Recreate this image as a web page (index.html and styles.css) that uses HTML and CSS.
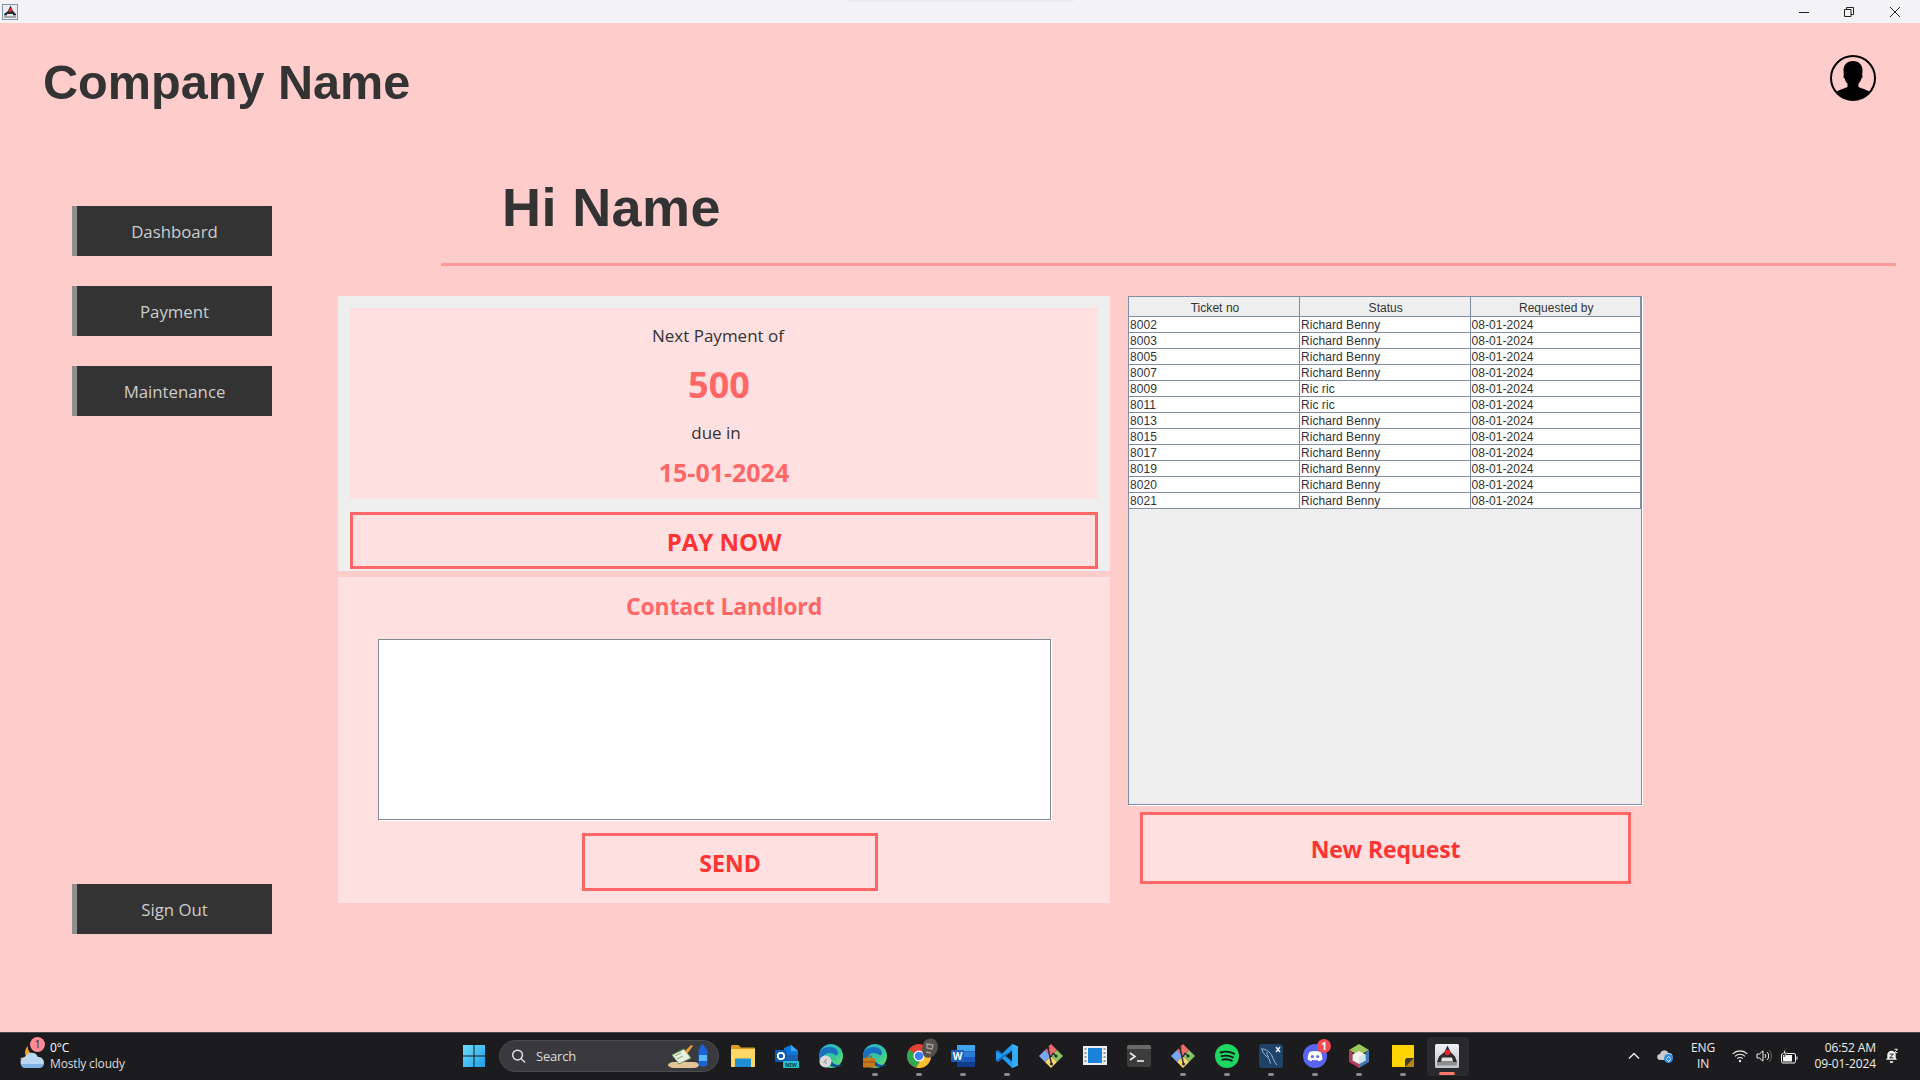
FILE: index.html
```html
<!DOCTYPE html>
<html lang="en">
<head>
<meta charset="utf-8">
<title>Company Name</title>
<link rel="stylesheet" href="styles.css">
</head>
<body>
<div class="window">
  <div class="titlebar">
    <svg class="app-icon" viewBox="0 0 16 16"><rect x=".5" y=".5" width="15" height="15" fill="#e9edf2" stroke="#7f93ad"/><path d="M8.500 1.500 6 7 2 10v3h12v-3l-3-3z" fill="#2c2c30"/><path d="M2 11h12v3H2z" fill="#a5a5a5"/><path d="M5 10h6v2H5z" fill="#e8e8e8"/><circle cx="8.500" cy="6" r="1.900" fill="#f0202a"/></svg>
    <div class="win-controls">
      <svg class="win-btn" viewBox="0 0 10 10"><path d="M0 5.500h10" stroke="#222" fill="none"/></svg>
      <svg class="win-btn" viewBox="0 0 10 10"><path d="M.5 2.500h6.500v7H.5zM2.500 2.500V.5h7v7H7" stroke="#222" fill="none"/></svg>
      <svg class="win-btn" viewBox="0 0 10 10"><path d="M0 0l10 10M10 0 0 10" stroke="#222" fill="none"/></svg>
    </div>
    <span class="snap-hint"></span>
  </div>

  <main class="main">
    <header class="header">
      <h1 class="brand">Company Name</h1>
      <svg class="avatar" viewBox="0 0 46 46"><defs><clipPath id="avc"><circle cx="23" cy="23" r="22"/></clipPath></defs><circle cx="23" cy="23" r="22" fill="none" stroke="#000" stroke-width="2"/><g clip-path="url(#avc)"><path d="M23 6c6 0 9.500 4 9.500 9 0 2-.1 3.500-.4 5 .8.500.6 2.500-.6 3.200-.6 2.800-1.800 4.300-3 5.300v3.500c3 1.500 7.500 2.500 11 4.500L46 46H0l6.500-9.500c3.500-2 8-3 11-4.500v-3.500c-1.200-1-2.400-2.500-3-5.300-1.200-.7-1.400-2.700-.6-3.200-.3-1.500-.4-3-.4-5 0-5 3.500-9 9.500-9z" fill="#000"/></g></svg>
    </header>

    <div class="body">
      <nav class="sidebar">
        <button class="nav-btn">Dashboard</button>
        <button class="nav-btn">Payment</button>
        <button class="nav-btn">Maintenance</button>
        <button class="nav-btn nav-signout">Sign Out</button>
      </nav>

      <div class="content">
        <h2 class="greeting">Hi Name</h2>
        <div class="columns">
          <div class="left-col">
            <section class="pay-card">
              <div class="pay-info">
                <p class="pay-label pay-next">Next Payment of</p>
                <p class="pay-amount">500</p>
                <p class="pay-label pay-due">due in</p>
                <p class="pay-date">15-01-2024</p>
              </div>
              <button class="action-btn pay-btn">PAY NOW</button>
            </section>
            <section class="contact-card">
              <h3 class="contact-title">Contact Landlord</h3>
              <div class="message-box"></div>
              <button class="action-btn send-btn">SEND</button>
            </section>
          </div>

          <div class="right-col">
            <div class="table-wrap">
              <table class="tickets">
                <thead><tr><th>Ticket no</th><th>Status</th><th>Requested by</th></tr></thead>
                <tbody>
                  <tr><td>8002</td><td>Richard Benny</td><td>08-01-2024</td></tr>
                  <tr><td>8003</td><td>Richard Benny</td><td>08-01-2024</td></tr>
                  <tr><td>8005</td><td>Richard Benny</td><td>08-01-2024</td></tr>
                  <tr><td>8007</td><td>Richard Benny</td><td>08-01-2024</td></tr>
                  <tr><td>8009</td><td>Ric ric</td><td>08-01-2024</td></tr>
                  <tr><td>8011</td><td>Ric ric</td><td>08-01-2024</td></tr>
                  <tr><td>8013</td><td>Richard Benny</td><td>08-01-2024</td></tr>
                  <tr><td>8015</td><td>Richard Benny</td><td>08-01-2024</td></tr>
                  <tr><td>8017</td><td>Richard Benny</td><td>08-01-2024</td></tr>
                  <tr><td>8019</td><td>Richard Benny</td><td>08-01-2024</td></tr>
                  <tr><td>8020</td><td>Richard Benny</td><td>08-01-2024</td></tr>
                  <tr><td>8021</td><td>Richard Benny</td><td>08-01-2024</td></tr>
                </tbody>
              </table>
            </div>
            <button class="action-btn request-btn">New Request</button>
          </div>
        </div>
      </div>
    </div>
  </main>

  <footer class="taskbar">
    <div class="weather">
      <div class="weather-icon">
        <svg viewBox="0 0 26 26" width="26" height="26"><path d="M9 3a8 8 0 0 0-2 10 8 8 0 0 1-6 2c2 3 6 4 9 3l6-6C12 11 8 8 9 3z" fill="#f2a32c"/><path d="M7 25a5.500 5.500 0 0 1-1-10.900A7 7 0 0 1 19 14a5.500 5.500 0 0 1 1 11z" fill="#b9d6f2"/><path d="M7 25a5.500 5.500 0 0 1-5-4h23a5.500 5.500 0 0 1-5 4z" fill="#7fb0e6"/></svg>
        <span class="weather-badge">1</span>
      </div>
      <div class="weather-text"><span class="weather-temp">0°C</span><span class="weather-desc">Mostly cloudy</span></div>
    </div>

    <div class="task-center">
      <div class="tb-item"><svg class="tb-svg start" viewBox="0 0 24 24"><defs><linearGradient id="wg" x1="0" y1="0" x2="1" y2="1"><stop offset="0" stop-color="#6fdcfb"/><stop offset="1" stop-color="#1c9fe8"/></linearGradient></defs><path d="M1 1h10.500v10.500H1zM12.500 1H23v10.500H12.500zM1 12.500h10.500V23H1zM12.500 12.500H23V23H12.500z" fill="url(#wg)"/></svg></div>

      <div class="search">
        <svg class="search-icon" viewBox="0 0 16 16"><circle cx="7" cy="7" r="5.200" fill="none" stroke="#e6e6e6" stroke-width="1.500"/><path d="M10.800 10.800 15 15" stroke="#e6e6e6" stroke-width="1.500" fill="none"/></svg>
        <span class="search-text">Search</span>
        <svg class="search-art" viewBox="0 0 42 24"><path d="M0 21c0-1.500 3-3 6-3h20c3 0 5 1.500 5 3s-2 3-5 3H6c-3 0-6-1.500-6-3z" fill="#e3c598"/><path d="M4 11l12-6 7 9-12 6z" fill="#e9efe2" stroke="#66945c"/><path d="M7 12l6-3M9 15l6-3" stroke="#86a880" fill="none"/><path d="M17 7l6-6 2 1-6 8z" fill="#e79b3c"/><path d="M32 4c0-2 1-3 2.500-4C36 1 37 2 37 4c2 1 2.500 2.500 2.500 4v12c0 2-2 2.500-4.500 2.500S30.500 22 30.500 20V8c0-2 .5-3 1.500-4z" fill="#1c63d8"/><path d="M31 11h8v6h-8z" fill="#5ab8ff"/></svg>
      </div>

      <div class="tb-apps">
        <div class="tb-item"><svg class="tb-svg" viewBox="0 0 24 24"><path d="M0 2.500C0 1.500.7 1 1.500 1h6l2.500 2.500h13c.6 0 1 .4 1 1V8H0z" fill="#d99a1e"/><path d="M0 5h24v17c0 .6-.4 1-1 1H1c-.6 0-1-.4-1-1z" fill="#ffd766"/><path d="M5 14.500h14c.6 0 1 .4 1 1V23H4v-7.500c0-.6.4-1 1-1z" fill="#1f8fd4"/></svg></div>
        <div class="tb-item"><svg class="tb-svg" viewBox="0 0 24 24"><path d="M9 4l7-3 7 6v11H9z" fill="#0f78d4"/><path d="M16 1l7 6h-7z" fill="#35a8f0"/><path d="M9 11h14v8H9z" fill="#1a5fb0"/><rect x="0" y="6" width="12" height="12" rx="1" fill="#0a5cb8"/><circle cx="6" cy="12" r="3.200" fill="none" stroke="#fff" stroke-width="1.800"/><rect x="8" y="17" width="16" height="7" rx="1" fill="#27c2c4"/><text x="16" y="22.800" class="svg-new">NEW</text></svg></div>
        <div class="tb-item"><svg class="tb-svg" viewBox="0 0 24 24"><defs><linearGradient id="eg" x1="0" y1="0" x2="1" y2="1"><stop offset="0" stop-color="#2aa9e0"/><stop offset=".6" stop-color="#36c89a"/><stop offset="1" stop-color="#7be264"/></linearGradient></defs><circle cx="12" cy="12" r="12" fill="url(#eg)"/><path d="M0 12C0 6 5 3 11 3c5 0 8 3 8 6 0 2-2 3-3 2-3-3-11-3-13 4 0 3 2 7 6 8C4 22 0 18 0 12z" fill="#1a6fc0"/><path d="M7 16c0 4 5 7 10 7 3 0 5-1 7-3-4 2-9 1-11-2z" fill="#0d4f9c"/><circle cx="6.500" cy="17.500" r="6" fill="#d9d9d9"/><path d="M4.500 19l3-4M8 19h-2" stroke="#888" fill="none"/></svg></div>
        <div class="tb-item run"><svg class="tb-svg" viewBox="0 0 24 24"><circle cx="12" cy="12" r="12" fill="url(#eg)"/><path d="M0 12C0 6 5 3 11 3c5 0 8 3 8 6 0 2-2 3-3 2-3-3-11-3-13 4 0 3 2 7 6 8C4 22 0 18 0 12z" fill="#1a6fc0"/><path d="M7 16c0 4 5 7 10 7 3 0 5-1 7-3-4 2-9 1-11-2z" fill="#0d4f9c"/><rect x="0" y="14" width="12" height="9.500" rx="1" fill="#c9791d"/><path d="M4 14v-2h4v2M0 18h12" stroke="#8a4f10" fill="none"/></svg></div>
        <div class="tb-item run chrome"><svg class="tb-svg" viewBox="0 0 24 24"><circle cx="12" cy="12" r="12" fill="#e34133"/><path d="M24 12A12 12 0 0 1 9 23.600L16 12z" fill="#fbc02d"/><path d="M0 12A12 12 0 0 0 9 23.600L13 17 5 7.500 2 6a12 12 0 0 0-2 6z" fill="#2da94f"/><circle cx="12" cy="12" r="5.500" fill="#fff"/><circle cx="12" cy="12" r="4.300" fill="#3f82ee"/></svg><svg class="chrome-over" viewBox="0 0 17 21"><path d="M3 4c2-4 9-5 12-1 3 4 2 9 0 12-2 4-8 6-11 4S0 9 3 4z" fill="#55514c"/><path d="M6 6l6 1-1 4-5-1zM5 14l5 1" stroke="#a8a39b" stroke-width="1.300" fill="none"/></svg></div>
        <div class="tb-item run"><svg class="tb-svg" viewBox="0 0 24 24"><path d="M6 1h17c.6 0 1 .4 1 1v5.500H6z" fill="#41a5ee"/><path d="M6 7.500h18V13H6z" fill="#2b7cd3"/><path d="M6 13h18v5.500H6z" fill="#185abd"/><path d="M6 18.500h18V22c0 .6-.4 1-1 1H6z" fill="#103f91"/><rect y="6" width="13" height="12" rx="1" fill="#1e5fbe"/><text x="6.500" y="15.500" class="svg-w">W</text></svg></div>
        <div class="tb-item run"><svg class="tb-svg" viewBox="0 0 24 24"><path d="M17.200 0 7.300 9.600 3 6.300 1 7.300v9.400l2 1 4.300-3.300 9.900 9.600 5.800-2.400V2.400zM17.200 6.500v11L10.500 12z" fill="#1f9cf0"/><path d="M17.200 0l5.800 2.400v19.200L17.200 24z" fill="#33adf5"/><path d="M17.200 6.500 7.300 14.400 3 17.700l-2-1 6.300-4.700zM1 7.300l2-1 4.300 3.300 2.200 2.400" fill="#0a6cbd"/></svg></div>
        <div class="tb-item"><svg class="tb-svg" viewBox="0 0 24 24"><path d="M12 12 6 6 0 12l6 6z" fill="#7aa7f5"/><path d="M12 12 18 6l6 6-6 6z" fill="#86c663"/><path d="M12 12 6 18l6 6 6-6z" fill="#f5d76e"/><path d="M12 12 6 6l6-6 6 6z" fill="#ec6a6a"/><path d="M9 4l3.500 16M14 9l-2 4M14 9l3 3" stroke="#2a2a2a" stroke-width="1.400" fill="none"/><circle cx="9" cy="4" r="1.500" fill="#2a2a2a"/><circle cx="12.500" cy="20" r="1.500" fill="#2a2a2a"/><circle cx="17" cy="12" r="1.500" fill="#2a2a2a"/></svg></div>
        <div class="tb-item"><svg class="tb-svg" viewBox="0 0 24 24"><rect y="2" width="24" height="19" fill="#eceff1"/><rect x="5" y="4" width="14" height="15" fill="#1a82d8"/><path d="M1.500 4h2v2h-2zM1.500 8h2v2h-2zM1.500 12h2v2h-2zM1.500 16h2v2h-2zM20.500 4h2v2h-2zM20.500 8h2v2h-2zM20.500 12h2v2h-2zM20.500 16h2v2h-2z" fill="#8e9aa2"/></svg></div>
        <div class="tb-item"><svg class="tb-svg" viewBox="0 0 24 24"><rect y="1" width="24" height="22" rx="2" fill="#3c3c3c"/><path d="M0 3c0-1 1-2 2-2h20c1 0 2 1 2 2v2H0z" fill="#6a6a6a"/><path d="M3 9l5 3.500L3 16" stroke="#f0f0f0" stroke-width="1.600" fill="none"/><path d="M10 17h7" stroke="#f0f0f0" stroke-width="1.600"/></svg></div>
        <div class="tb-item run"><svg class="tb-svg" viewBox="0 0 24 24"><path d="M12 12 6 6 0 12l6 6z" fill="#7aa7f5"/><path d="M12 12 18 6l6 6-6 6z" fill="#86c663"/><path d="M12 12 6 18l6 6 6-6z" fill="#f5d76e"/><path d="M12 12 6 6l6-6 6 6z" fill="#ec6a6a"/><path d="M9 4l3.500 16M14 9l-2 4M14 9l3 3" stroke="#2a2a2a" stroke-width="1.400" fill="none"/><circle cx="9" cy="4" r="1.500" fill="#2a2a2a"/><circle cx="12.500" cy="20" r="1.500" fill="#2a2a2a"/><circle cx="17" cy="12" r="1.500" fill="#2a2a2a"/></svg></div>
        <div class="tb-item run"><svg class="tb-svg" viewBox="0 0 24 24"><circle cx="12" cy="12" r="12" fill="#1ed760"/><path d="M5.500 8.500c4.500-1.300 9.500-1 13.500 1.200M6.500 12.200c3.800-1 8-.7 11.300 1.200M7.500 15.700c3-.8 6.500-.5 9.200 1" stroke="#13161a" stroke-width="1.900" stroke-linecap="round" fill="none"/></svg></div>
        <div class="tb-item run"><svg class="tb-svg" viewBox="0 0 24 24"><rect width="24" height="24" rx="3" fill="#1d4468"/><path d="M2 5c5-.5 9 3 11 7 1.500 3 2 6 5 9M3 5.500c1 4 4 7 7 9l1.500 5M8 8c-.5 2 .5 4 2 5" stroke="#a9c4d8" stroke-width=".9" fill="none"/><path d="M17 3l4 5M21 3l-4 5" stroke="#dfe9f0" stroke-width="1.600" fill="none"/></svg></div>
        <div class="tb-item run"><svg class="tb-svg" viewBox="0 0 24 24"><circle cx="12" cy="12" r="12" fill="#5865f2"/><path d="M6.500 8c3.400-1.400 7.600-1.400 11 0 1.500 2.500 2 5 1.800 7.500-1.300 1-2.500 1.500-3.800 1.800l-.9-1.300c-1.700.4-3.500.4-5.200 0l-.9 1.300c-1.300-.3-2.500-.8-3.800-1.800C4.500 13 5 10.500 6.500 8z" fill="#fff"/><circle cx="9.300" cy="12.500" r="1.500" fill="#5865f2"/><circle cx="14.700" cy="12.500" r="1.500" fill="#5865f2"/></svg><span class="tb-badge">1</span></div>
        <div class="tb-item run"><svg class="tb-svg" viewBox="0 0 24 24"><path d="M12 0 22 6 12 11.500 2 6z" fill="#9fc45b"/><path d="M2 6v12l10 6V20L5.500 16V8.500z" fill="#b83b5e"/><path d="M22 6v12l-10 6V20l6.500-4V8.500z" fill="#3f78b5"/><path d="M12 7l6.500 3.500v6L12 20l-6.500-3.500v-6z" fill="#f2f4ee"/><path d="M12 12.500l6.500-2v6L12 20z" fill="#cfe2ee"/></svg></div>
        <div class="tb-item run"><svg class="tb-svg" viewBox="0 0 24 24"><path d="M1 1h22v13l-9 9H1z" fill="#ffd400"/><path d="M14 23v-7c0-1 1-2 2-2h7v1l-8 8z" fill="#3a3a32"/><path d="M14 23l9-9v8c0 .6-.4 1-1 1z" fill="#b8860b"/></svg></div>
        <div class="tb-item active"><svg class="tb-svg" viewBox="0 0 24 24"><defs><linearGradient id="jg" x1="0" y1="0" x2="0" y2="1"><stop offset="0" stop-color="#eef2f6"/><stop offset="1" stop-color="#bfc4c9"/></linearGradient></defs><rect width="24" height="24" rx="1.500" fill="url(#jg)"/><path d="M12.500 1.500 9.500 8 4 12.500 2 18h20l-2-5.500L15.500 8z" fill="#2b2b30"/><path d="M2 18h20v3.500H2z" fill="#8f8f8f"/><path d="M7 13.500h10l1 4H6z" fill="#e3e3e3"/><circle cx="12.500" cy="8.500" r="2.800" fill="#ef1f2a"/></svg></div>
      </div>
    </div>

    <div class="tray">
      <svg class="tray-chevron" viewBox="0 0 12 8"><path d="M1 6.500 6 1.500l5 5" stroke="#eee" stroke-width="1.400" fill="none"/></svg>
      <svg class="tray-cloud" viewBox="0 0 16 14"><path d="M3.500 11a3 3 0 0 1-.5-6 4.500 4.500 0 0 1 8.500-1 3.500 3.500 0 0 1 1 7z" fill="#c6cbd0"/><circle cx="11.500" cy="9.500" r="4.500" fill="#2f8ce0"/><path d="M9.500 9.500l2-2 2 2M9.500 10.500l2 2 2-2" stroke="#fff" fill="none"/></svg>
      <div class="tray-lang"><span>ENG</span><span>IN</span></div>
      <svg class="tray-wifi" viewBox="0 0 16 14"><path d="M.7 4.800a10.500 10.500 0 0 1 14.600 0M3 7.300a7.200 7.200 0 0 1 10 0M5.300 9.700a3.800 3.800 0 0 1 5.400 0" stroke="#eee" stroke-width="1.100" fill="none"/><circle cx="8" cy="12" r="1.200" fill="#eee"/></svg>
      <svg class="tray-vol" viewBox="0 0 16 14"><path d="M1 5h2.500L7 1.800v10.400L3.500 9H1z" stroke="#eee" fill="none"/><path d="M9 5a3 3 0 0 1 0 4M11 3a5.500 5.500 0 0 1 0 8" stroke="#eee" fill="none"/><path d="M13 1a8.500 8.500 0 0 1 0 12" stroke="#666" fill="none"/></svg>
      <svg class="tray-batt" viewBox="0 0 18 15"><rect x="1.500" y="4.500" width="14" height="9.500" rx="1.500" fill="#1c1c1f" stroke="#f5f5f5"/><rect x="3" y="6" width="9" height="6.500" fill="#f5f5f5"/><path d="M16.500 7.500h1v3h-1z" fill="#f5f5f5"/><path d="M5 0 3 4.500h2L4 8l3.500-4.500H5.500z" fill="#f5f5f5" stroke="#1c1c1f" stroke-width=".6"/></svg>
      <div class="tray-clock"><span>06:52 AM</span><span>09-01-2024</span></div>
      <svg class="tray-bell" viewBox="0 0 16 16"><path d="M8 2.500a4.500 4.500 0 0 0-4.500 4.500v3L2 12h12l-1.500-2V7A4.500 4.500 0 0 0 8 2.500z" fill="#f0f0f0"/><path d="M6 13.500a2 2 0 0 0 4 0z" fill="#f0f0f0"/><path d="M11 .8h3.500L11 4.500h3.500" stroke="#f0f0f0" stroke-width="1" fill="none"/><path d="M6 6h4L6 10h4" stroke="#1c1c1c" fill="none"/></svg>
    </div>
  </footer>
</div>
</body>
</html>
```

FILE: styles.css
```css
* { box-sizing: border-box; }
html, body { margin: 0; padding: 0; }
body { width: 1920px; height: 1080px; overflow: hidden; font-family: "Open Sans", "Noto Sans", sans-serif; color: #333; }
p, h1, h2, h3 { margin: 0; }
button { font-family: inherit; cursor: pointer; padding: 0; border-radius: 0; }

.window { display: flex; flex-direction: column; height: 1080px; background: #ffcccc; }

/* title bar */
.titlebar { height: 23px; flex: none; background: #f3f3f5; display: flex; align-items: center; justify-content: space-between; padding-left: 2px; padding-right: 20px; position: relative; }
.app-icon { width: 16px; height: 16px; display: block; }
.win-controls { display: flex; gap: 36px; }
.win-btn { width: 10px; height: 10px; display: block; }
.win-btn:first-child { margin-right: -1px; }
.snap-hint { position: absolute; left: 848px; top: 0; width: 226px; height: 2px; background: #ebebed; border-radius: 0 0 4px 4px; }

/* main */
.main { flex: 1; min-height: 0; display: flex; flex-direction: column; }
.header { height: 147px; flex: none; display: flex; justify-content: space-between; align-items: flex-start; padding: 32px 44px 0 43px; }
.brand { font-family: "Liberation Sans", Arial, sans-serif; font-size: 48.600px; font-weight: 700; line-height: 56px; color: #333; margin-top: -1px; }
.avatar { width: 46px; height: 46px; display: block; }

.body { display: grid; grid-template-columns: 200px 1fr; column-gap: 66px; padding-left: 72px; }

.sidebar { display: flex; flex-direction: column; gap: 30px; padding-top: 36px; height: 764px; }
.nav-btn { height: 50px; flex: none; width: 200px; background: #333; border: 0; border-left: 5px solid #8f8f8f; color: #ccc; font-size: 16.800px; font-weight: 400; padding-top: 1px; }
.nav-signout { margin-top: auto; }

.content { min-width: 0; }
.greeting { margin-left: 103px; margin-right: 24px; height: 96px; border-bottom: 3px solid #ff9999; font-family: "Liberation Sans", Arial, sans-serif; font-size: 54px; font-weight: 700; line-height: 56px; padding-top: 9px; padding-left: 61px; color: #333; letter-spacing: .4px; }

.columns { display: flex; gap: 18px; margin-top: 30px; align-items: flex-start; }
.left-col { width: 772px; display: flex; flex-direction: column; gap: 6px; }

.pay-card { background: #eee; height: 275px; padding: 12px 12px 0; display: flex; flex-direction: column; gap: 13px; }
.pay-info { background: #ffe0e0; height: 191px; display: flex; flex-direction: column; align-items: center; }
.pay-label { font-size: 17px; line-height: 24px; color: #333; }
.pay-next { margin-top: 16px; margin-right: 12px; }
.pay-amount { font-size: 36px; font-weight: 700; line-height: 44px; margin-top: 15px; margin-right: 10px; color: #ff6666; }
.pay-due { margin-top: 14px; margin-right: 16px; }
.pay-date { font-size: 25px; font-weight: 700; line-height: 32px; margin-top: 11px; color: #ff6666; }

.action-btn { background: #ffe0e0; border: 3px solid #ff6666; color: #ff3333; font-size: 23px; font-weight: 700; display: block; padding-top: 1px; }
.pay-btn { height: 57px; width: 100%; font-size: 24px; }

.contact-card { background: #ffe0e0; height: 326px; padding: 0 0 0 40px; display: flex; flex-direction: column; }
.contact-title { font-size: 23px; font-weight: 700; line-height: 32px; color: #ff6666; text-align: center; margin: 13px 40px 0 0; letter-spacing: -.15px; }
.message-box { width: 673px; height: 181px; background: #fff; border: 1px solid #7f8a94; margin-top: 17px; box-shadow: 1px 1px 0 #fff; }
.send-btn { width: 296px; height: 58px; margin: 13px 0 0 204px; letter-spacing: .1px; }

.right-col { width: 514px; display: flex; flex-direction: column; gap: 7px; }
.table-wrap { height: 509px; background: #eee; border: 1px solid #7f8fa3; box-shadow: 1px 1px 0 #fff; }
.tickets { border-collapse: collapse; width: 512px; table-layout: fixed; font-family: "Liberation Sans", Arial, sans-serif; font-size: 12px; letter-spacing: .05px; color: #333; background: #fff; }
.tickets th { height: 19px; background: #eee; font-weight: 400; border: 1px solid #7f8fa3; border-top: 0; padding: 4px 0 0 2px; line-height: 15px; text-align: center; }
.tickets th:first-child { border-left: 0; }
.tickets td { height: 16px; padding: 1px 0 0 1px; line-height: 14px; border: 1px solid #7f8fa3; white-space: nowrap; overflow: hidden; }
.tickets td:first-child { border-left: 0; }
.request-btn { width: 491px; height: 72px; margin-left: 12px; letter-spacing: -.15px; }

/* taskbar */
.taskbar { height: 48px; flex: none; background: #1c1c1f; border-top: 1px solid #4a4a4a; padding-bottom: 1px; display: flex; align-items: center; color: #eee; }
.weather { width: 452px; flex: none; display: flex; align-items: center; padding-left: 19px; }
.weather-icon { width: 26px; height: 26px; position: relative; flex: none; }
.weather-icon svg { display: block; }
.weather-badge { position: absolute; left: 11px; top: -6px; width: 15px; height: 15px; line-height: 15px; border-radius: 50%; background: #ff8a96; color: #1c1c1f; font-size: 10px; text-align: center; }
.weather-text { display: flex; flex-direction: column; margin-left: 5px; font-size: 12px; line-height: 16px; letter-spacing: -.15px; }
.weather-temp { color: #fff; }
.weather-desc { color: #ddd; }

.task-center { display: flex; align-items: center; }
.tb-item { width: 44px; height: 47px; display: flex; align-items: center; justify-content: center; position: relative; flex: none; }
.tb-svg { width: 24px; height: 24px; display: block; }
.run::after { content: ""; position: absolute; left: 19px; bottom: 4px; width: 6px; height: 3px; border-radius: 2px; background: #8a8a8a; }
.active { background: #2a2a2d; border-radius: 4px; width: 42px; height: 39px; margin-left: 2px; }
.active .tb-svg { margin-right: 2px; }
.active::after { content: ""; position: absolute; left: 12px; bottom: 1px; width: 16px; height: 3px; border-radius: 2px; background: #f97a66; }
.chrome-over { position: absolute; width: 17px; height: 21px; left: 24px; top: 5px; }
.tb-badge { position: absolute; left: 24px; top: 6px; width: 14px; height: 14px; border-radius: 50%; background: #f04a52; color: #fff; font-size: 10px; font-weight: 700; line-height: 14px; text-align: center; }
.svg-new { font-family: "Open Sans", sans-serif; font-size: 5px; font-weight: 700; text-anchor: middle; fill: #0c3a4a; }
.svg-w { font-family: "Open Sans", sans-serif; font-size: 10px; font-weight: 700; text-anchor: middle; fill: #fff; }

.search { width: 220px; height: 32px; margin: 0 2px 0 3px; border-radius: 16px; background: #3a3a3e; border: 1px solid #4c4c50; display: flex; align-items: center; padding: 0 8px 0 11px; flex: none; }
.search-icon { width: 15px; height: 16px; display: block; flex: none; }
.search-text { margin-left: 10px; font-size: 13px; letter-spacing: -.2px; color: #ddd; flex: 1; }
.search-art { width: 42px; height: 24px; display: block; flex: none; }
.tb-apps { display: flex; align-items: center; }

.tray { display: flex; align-items: center; flex: 1; min-width: 0; padding-left: 159px; }
.tray-chevron { width: 12px; height: 8px; display: block; flex: none; }
.tray-cloud { width: 16px; height: 14px; display: block; flex: none; margin-left: 17px; }
.tray-lang { display: flex; flex-direction: column; align-items: center; width: 26px; margin-left: 17px; font-size: 12px; line-height: 16px; letter-spacing: -.1px; flex: none; }
.tray-wifi { width: 16px; height: 14px; display: block; flex: none; margin-left: 16px; }
.tray-vol { width: 16px; height: 14px; display: block; flex: none; margin-left: 8px; }
.tray-batt { width: 18px; height: 15px; display: block; flex: none; margin-left: 8px; }
.tray-clock { display: flex; flex-direction: column; align-items: flex-end; width: 66px; margin-left: 12px; font-size: 12px; line-height: 16px; letter-spacing: -.1px; flex: none; }
.tray-bell { width: 15px; height: 16px; display: block; flex: none; margin-left: 8px; }
```
